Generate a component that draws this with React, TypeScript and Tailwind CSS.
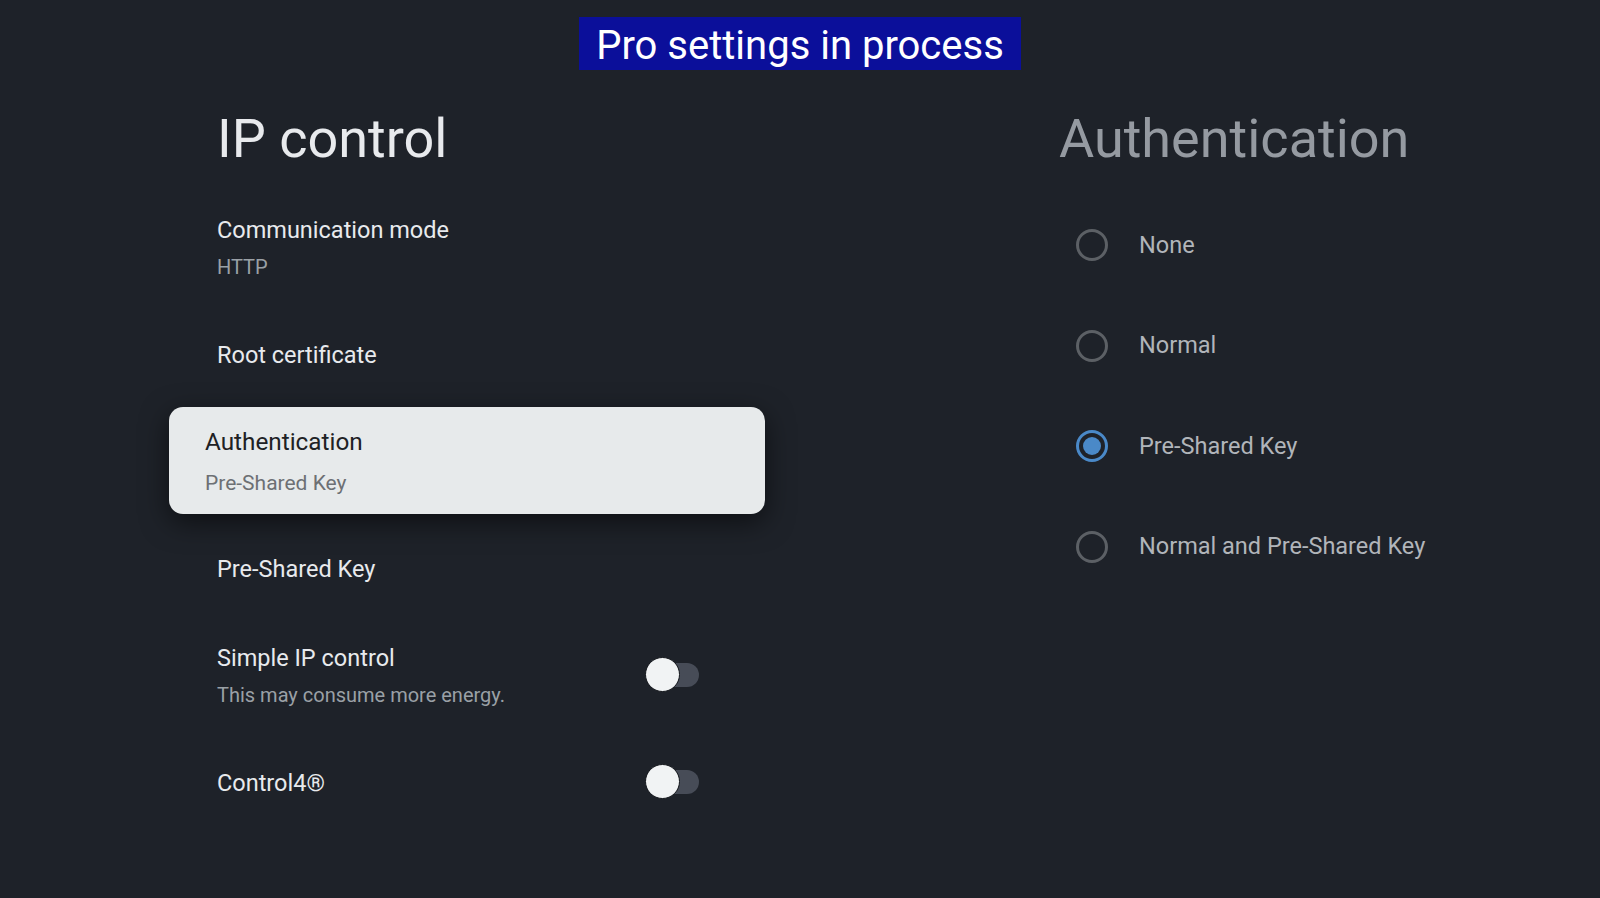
import React from 'react';

type Row = {
  title: string;
  subtitle?: string;
  toggle?: boolean;
  focused?: boolean;
};

const rows: Row[] = [
  { title: 'Communication mode', subtitle: 'HTTP' },
  { title: 'Root certificate' },
  { title: 'Authentication', subtitle: 'Pre-Shared Key', focused: true },
  { title: 'Pre-Shared Key' },
  { title: 'Simple IP control', subtitle: 'This may consume more energy.', toggle: true },
  { title: 'Control4®', toggle: true },
];

const options = ['None', 'Normal', 'Pre-Shared Key', 'Normal and Pre-Shared Key'];

function Toggle() {
  return (
    <div className="relative w-[54px] h-[35px] flex items-center justify-end">
      <div className="w-[46px] h-[24px] rounded-full bg-[#474c57]" />
      <div className="absolute left-0 top-0 w-[35px] h-[35px] rounded-full bg-[#f1f3f4] border border-[#14171c]" />
    </div>
  );
}

function Radio({ checked }: { checked: boolean }) {
  return (
    <div
      className={
        checked
          ? 'w-[32px] h-[32px] rounded-full border-[3px] border-[#4a89c8] flex items-center justify-center'
          : 'w-[32px] h-[32px] rounded-full border-[3px] border-[#5c6065]'
      }
    >
      {checked && <div className="w-[18px] h-[18px] rounded-full bg-[#4a89c8]" />}
    </div>
  );
}

export default function App() {
  return (
    <div className="w-[1600px] h-[898px] bg-[#1e2229] font-[Roboto,sans-serif] flex flex-col overflow-hidden">
      {/* Banner */}
      <div className="mx-auto mt-[17px] h-[53px] w-[442px] bg-[#0b0f9a] flex items-center justify-center pt-[4px]">
        <span className="text-[40px] leading-none text-white">Pro settings in process</span>
      </div>

      <div className="flex mt-[37px]">
        {/* Left: IP control */}
        <div className="ml-[169px] w-[596px] flex flex-col">
          <h1 className="pl-[48px] text-[54px] leading-[64px] text-[#e8eaed] mb-[22px]">IP control</h1>
          {rows.map((row) =>
            row.focused ? (
              <div
                key={row.title}
                className="h-[107px] rounded-[14px] bg-[#e7eaeb] px-[36px] flex flex-col justify-center shadow-[0_8px_28px_rgba(0,0,0,0.55)]"
              >
                <div className="mt-[2px] text-[24.3px] leading-[30px] text-[#202124]">{row.title}</div>
                <div className="mt-[13px] text-[21px] leading-[26px] text-[#6d7074]">{row.subtitle}</div>
              </div>
            ) : (
              <div key={row.title} className="h-[107px] pl-[48px] pr-[66px] flex items-center justify-between">
                <div className="flex flex-col pt-[2px]">
                  <div className="text-[23.5px] leading-[30px] text-[#e8eaed]">{row.title}</div>
                  {row.subtitle && (
                    <div className="mt-[9px] text-[20px] leading-[26px] text-[#9aa0a6]">{row.subtitle}</div>
                  )}
                </div>
                {row.toggle && <Toggle />}
              </div>
            )
          )}
        </div>

        {/* Right: Authentication options */}
        <div className="ml-[294px] flex flex-col">
          <h2 className="text-[54px] leading-[64px] text-[#959aa1]">Authentication</h2>
          <div className="mt-[24px] flex flex-col">
            {options.map((opt, i) => (
              <div key={opt} className="h-[100.5px] pl-[17px] flex items-center gap-[31px]">
                <Radio checked={i === 2} />
                <span className="text-[23.5px] text-[#b1b5ba]">{opt}</span>
              </div>
            ))}
          </div>
        </div>
      </div>
    </div>
  );
}
